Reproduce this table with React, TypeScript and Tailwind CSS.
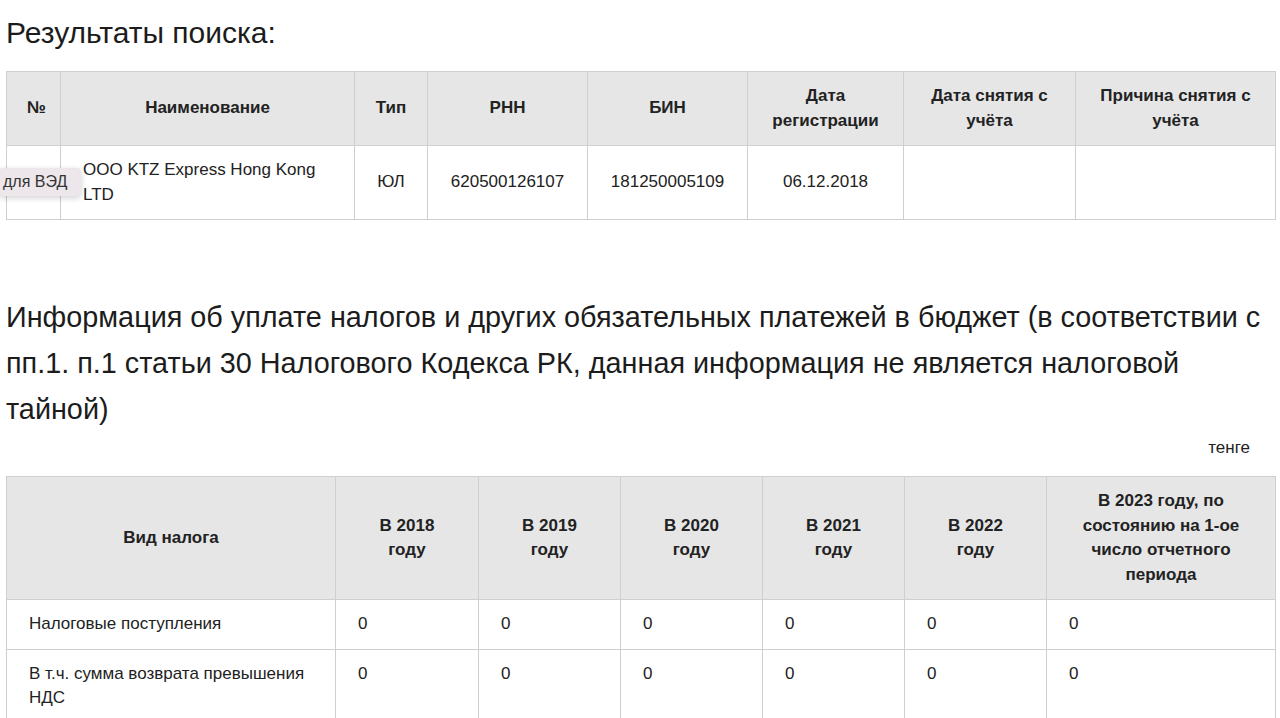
const font = { fontFamily: '"Liberation Sans", Arial, sans-serif' };

const years = ["В 2018 году", "В 2019 году", "В 2020 году", "В 2021 году", "В 2022 году"];

const taxRows = [
  { name: "Налоговые поступления", values: ["0", "0", "0", "0", "0", "0"] },
  { name: "В т.ч. сумма возврата превышения НДС", values: ["0", "0", "0", "0", "0", "0"] },
];

function Th({ children, className = "" }: { children: React.ReactNode; className?: string }) {
  return (
    <th className={`border border-[#cfcfcf] bg-[#e6e6e6] px-5 py-3 text-center align-middle text-[17px] font-bold leading-[24.5px] text-[#222] ${className}`}>
      {children}
    </th>
  );
}

export default function App() {
  return (
    <div className="min-h-screen bg-white pl-[6px] pr-[4px] text-[#1c1c1c]" style={font}>
      <h1 className="pt-[10px] text-[30px] font-normal leading-[46px]">Результаты поиска:</h1>

      <table className="mt-[15px] w-full table-fixed border-collapse">
        <colgroup>
          <col className="w-[54px]" />
          <col className="w-[294px]" />
          <col className="w-[73px]" />
          <col className="w-[160px]" />
          <col className="w-[160px]" />
          <col className="w-[156px]" />
          <col className="w-[172px]" />
          <col />
        </colgroup>
        <thead>
          <tr className="h-[74px]">
            <Th className="px-0">№</Th>
            <Th>Наименование</Th>
            <Th className="px-0">Тип</Th>
            <Th>РНН</Th>
            <Th>БИН</Th>
            <Th className="px-2">Дата регистрации</Th>
            <Th className="px-3">Дата снятия с учёта</Th>
            <Th className="px-3">Причина снятия с учёта</Th>
          </tr>
        </thead>
        <tbody>
          <tr className="h-[72px] text-[17px] leading-[24.5px] text-[#222]">
            <td className="relative border border-[#cfcfcf]">
              <span className="absolute left-[-8px] top-[22px] whitespace-nowrap rounded-sm bg-[#ede7eb] py-[2px] pl-[4px] pr-[14px] text-[16px] leading-[24px] text-[#333] shadow-[0_2px_6px_rgba(0,0,0,0.18)]">
                для ВЭД
              </span>
            </td>
            <td className="border border-[#cfcfcf] py-3 pl-[22px] pr-4">ООО KTZ Express Hong Kong LTD</td>
            <td className="border border-[#cfcfcf] text-center">ЮЛ</td>
            <td className="border border-[#cfcfcf] text-center">620500126107</td>
            <td className="border border-[#cfcfcf] text-center">181250005109</td>
            <td className="border border-[#cfcfcf] text-center">06.12.2018</td>
            <td className="border border-[#cfcfcf]"></td>
            <td className="border border-[#cfcfcf]"></td>
          </tr>
        </tbody>
      </table>

      <h2 className="mt-[74px] text-[28.8px] font-normal leading-[46px]">
        Информация об уплате налогов и других обязательных платежей в бюджет (в соответствии с пп.1. п.1 статьи 30
        Налогового Кодекса РК, данная информация не является налоговой тайной)
      </h2>

      <p className="mt-[4px] pr-[26px] text-right text-[17px] leading-[24px] text-[#222]">тенге</p>

      <table className="mt-[16px] w-full table-fixed border-collapse">
        <colgroup>
          <col className="w-[329px]" />
          <col className="w-[143px]" />
          <col className="w-[142px]" />
          <col className="w-[142px]" />
          <col className="w-[142px]" />
          <col className="w-[142px]" />
          <col />
        </colgroup>
        <thead>
          <tr className="h-[122px]">
            <Th>Вид налога</Th>
            {years.map((y) => (
              <Th key={y} className="px-8">
                {y}
              </Th>
            ))}
            <Th className="px-8">В 2023 году, по состоянию на 1-ое число отчетного периода</Th>
          </tr>
        </thead>
        <tbody>
          {taxRows.map((row) => (
            <tr key={row.name} className="text-[17px] leading-[24.5px] text-[#222]">
              <td className="border border-[#cfcfcf] py-3 pl-[22px] pr-6 align-top">{row.name}</td>
              {row.values.map((v, i) => (
                <td key={i} className="border border-[#cfcfcf] py-3 pl-[22px] align-top">
                  {v}
                </td>
              ))}
            </tr>
          ))}
        </tbody>
      </table>
    </div>
  );
}
